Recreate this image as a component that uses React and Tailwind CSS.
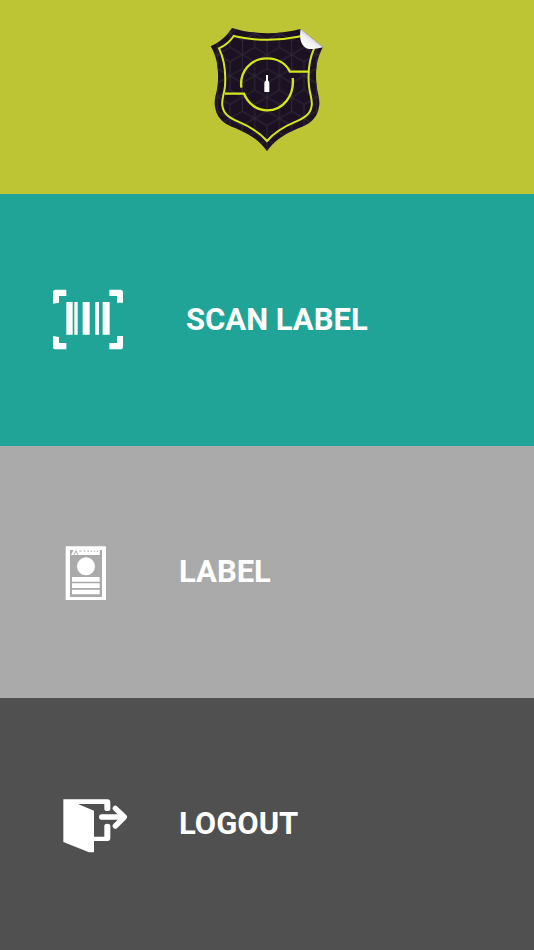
import React from 'react'

function ShieldLogo() {
    return (
        <svg viewBox="0 0 402 420" className="w-[134px] h-[140px]" role="img" aria-label="Home">
            <defs>
                <pattern id="cubes" width="74" height="128" patternUnits="userSpaceOnUse" x="16" y="18">
                    <path
                        d="M37 0L74 21V64L37 86L0 64V21ZM37 86V128M37 43V86M37 43L0 21M37 43L74 21M74 107V128M74 0V21M0 107V128M0 0V21M74 107L37 86M0 107L37 86"
                        fill="none"
                        stroke="#2e2736"
                        strokeWidth="3"
                    />
                </pattern>
                <linearGradient id="peel" x1="318" y1="80" x2="346" y2="44" gradientUnits="userSpaceOnUse">
                    <stop offset="0" stopColor="#ffffff" />
                    <stop offset="0.5" stopColor="#eeeeee" />
                    <stop offset="1" stopColor="#a8a8a8" />
                </linearGradient>
                <path
                    id="shield"
                    d="M96 24C155 43 238 45 302 27L369 81C350 115 345 150 350 198C353 222 361 240 357 260C353 287 337 305 317 315C303 322 290 327 277 333C246 347 222 365 201 393C180 365 156 347 125 333C112 327 99 322 85 315C65 305 49 287 45 260C41 240 49 222 53 198C57 150 52 112 32 79C56 68 80 50 96 24Z"
                />
            </defs>
            <use href="#shield" fill="#1b1123" />
            <use href="#shield" fill="url(#cubes)" />
            <path
                d="M303 49C236 63 162 62 101 48C91 64 74 77 57 85C74 120 78 156 75 198C73 222 64 238 67 257C70 284 92 295 115 305C155 322 180 338 201 363C222 338 247 322 287 305C310 295 332 284 335 257C338 238 329 222 327 198C323 156 327 120 342 86"
                fill="none"
                stroke="#d5e61b"
                strokeWidth="6"
            />
            <path
                d="M124 203C118 155 152 115 201 115C233 115 258 131 270 155H324M75 221H132C145 251 170 271 201 271C250 271 284 226 278 174"
                fill="none"
                stroke="#d5e61b"
                strokeWidth="7"
            />
            <path d="M198 165H204V180C204 183 208 184 208 189V216H193V189C193 184 198 183 198 180Z" fill="#ffffff" />
            <path d="M302 26C296 60 306 91 340 87C350 86 360 84 370 82Z" fill="url(#peel)" />
        </svg>
    )
}

function ScanIcon() {
    return (
        <svg viewBox="0 0 288 240" className="w-24 h-20 shrink-0" fill="currentColor" aria-hidden="true">
            <path d="M79 29H47Q39 29 39 38V71L57 68V48H79ZM208 29H241Q249 29 249 38V68H231V48H208ZM39 168L57 171V189H79V208H47Q39 208 39 200ZM231 168H249V200Q249 208 241 208H208V189H231Z" />
            <path d="M79 66H98V164H79ZM103 66H113V164H103ZM128 66H149V164H128ZM166 66H177V164H166ZM188 66H209V164H188Z" />
        </svg>
    )
}

function LabelIcon() {
    return (
        <svg viewBox="0 0 288 240" className="w-24 h-20 shrink-0" fill="currentColor" aria-hidden="true">
            <g transform="translate(48 12)">
                <path fillRule="evenodd" d="M29 31H150V192H29ZM42 42V183H138V42Z" />
                <path d="M45 57L54 40H131V57Z" />
                {/* tiny lettering strip */}
                <path
                    d="M54 56L60 44L65 56M70 45H76M83 43L88 47M94 45H99M106 44V48M113 45H118M125 44V48"
                    fill="none"
                    stroke="#aaaaaa"
                    strokeWidth="3"
                />
                <circle cx="90" cy="91" r="27" />
                <path d="M48 123H131V137H48ZM48 142H131V156H48ZM48 161H131V175H48Z" />
            </g>
        </svg>
    )
}

function LogoutIcon() {
    return (
        <svg viewBox="0 0 288 240" className="w-24 h-20 shrink-0" fill="currentColor" aria-hidden="true">
            <g transform="translate(42 18)">
                <path d="M28 28H160Q169 28 169 37V57Q169 63 160 63Q151 63 151 57V42H72L120 62V140H151V108Q151 101 160 101Q169 101 169 108V144Q169 153 160 153H120V187H105L28 156Z" />
                <path
                    d="M143 81H208M184 55L211 81L184 108"
                    fill="none"
                    stroke="currentColor"
                    strokeWidth="16"
                    strokeLinecap="round"
                    strokeLinejoin="round"
                />
            </g>
        </svg>
    )
}

const ITEMS = [
    { label: 'SCAN LABEL', icon: ScanIcon, style: 'bg-[#20a498] gap-[50px]' },
    { label: 'LABEL', icon: LabelIcon, style: 'bg-[#aaaaaa] gap-[43px]' },
    { label: 'LOGOUT', icon: LogoutIcon, style: 'bg-[#505050] gap-[43px]' },
]

export default function App() {
    return (
        <div className="flex min-h-screen flex-col font-['Roboto',sans-serif]">
            <header className="flex justify-center bg-[#bdc534] pt-5 pb-[34px]">
                <ShieldLogo />
            </header>
            <nav className="flex flex-1 flex-col">
                {ITEMS.map(({ label, icon: Icon, style }) => (
                    <button key={label} type="button" className={`flex flex-1 items-center py-8 pl-10 text-left text-white ${style}`}>
                        <Icon />
                        <span className="text-[31px] leading-10 font-bold">{label}</span>
                    </button>
                ))}
            </nav>
        </div>
    )
}
